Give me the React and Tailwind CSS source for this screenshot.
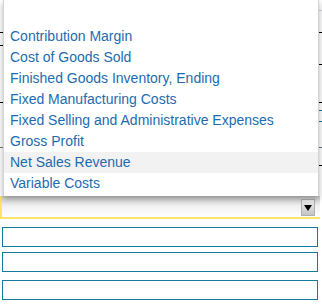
import React from "react";

const options = [
  "Contribution Margin",
  "Cost of Goods Sold",
  "Finished Goods Inventory, Ending",
  "Fixed Manufacturing Costs",
  "Fixed Selling and Administrative Expenses",
  "Gross Profit",
  "Net Sales Revenue",
  "Variable Costs",
];

// bits of the form that peek out on either side of the open list
const peeks = [
  { h: "h-[10px]", l: "", r: "" },
  { h: "h-[22px]", l: "", r: "bg-gray-300" },
  { h: "h-[13px]", l: "bg-black", r: "bg-black" },
  { h: "h-[19px]", l: "bg-black", r: "" },
  { h: "h-[38px]", l: "", r: "bg-black" },
  { h: "h-[8px]", l: "bg-black", r: "bg-black" },
  { h: "h-[11px]", l: "", r: "bg-[#137a9a]" },
  { h: "h-[26px]", l: "", r: "bg-[#137a9a]" },
  { h: "h-[18px]", l: "bg-gray-500", r: "bg-gray-500" },
  { h: "h-[31px]", l: "", r: "bg-black" },
];

const App = () => {
  return (
    <div
      className="relative w-[322px] h-[305px] bg-white overflow-hidden"
      style={{ fontFamily: '"Liberation Sans", Arial, sans-serif' }}
    >
      {/* page content behind the open menu */}
      <div className="h-[196px] flex flex-col">
        {peeks.map((p, i) => (
          <div key={i} className={`${p.h} flex justify-between items-start`}>
            <div className={`w-[3px] h-[1px] ${p.l}`} />
            <div className={`w-[3px] h-[1px] ${p.r}`} />
          </div>
        ))}
      </div>

      {/* the select */}
      <div className="h-[23px] w-[320px] border-b-2 border-l-2 border-[#fbe36c] bg-gradient-to-b from-[#cfcfcf] via-[#f2f2f2] to-white flex items-end justify-end pr-[5px]">
        <div className="w-[14px] h-[17px] mb-[1px] bg-gradient-to-b from-[#f0f0f0] to-[#c4c4c4] border border-[#b0b0b0] flex items-center justify-center">
          <svg width="8" height="6" viewBox="0 0 8 6">
            <path d="M0 0 L8 0 L4 6 Z" fill="#000" />
          </svg>
        </div>
      </div>

      {/* text inputs */}
      <div className="flex flex-col pl-[2px] pt-[8px]">
        <div className="w-[316px] h-[20px] border-[1.5px] border-[#137a9a]" />
        <div className="w-[316px] h-[20px] border-[1.5px] border-[#137a9a] mt-[5px]" />
        <div className="w-[316px] h-[20px] border-[1.5px] border-[#137a9a] mt-[8px]" />
      </div>

      {/* open dropdown list */}
      <div className="absolute left-[3px] top-0 w-[316px] h-[196px] bg-white border-x border-[#d4d4d4] shadow-[0_3px_6px_rgba(0,0,0,0.3)] pt-[26px]">
        {options.map((o) => (
          <div
            key={o}
            className={`h-[21px] leading-[21px] pl-[6px] text-[14px] text-[#1d6bb0] whitespace-nowrap ${
              o === "Net Sales Revenue" ? "bg-[#f2f2f2]" : ""
            }`}
          >
            {o}
          </div>
        ))}
      </div>
    </div>
  );
};

export default App;
